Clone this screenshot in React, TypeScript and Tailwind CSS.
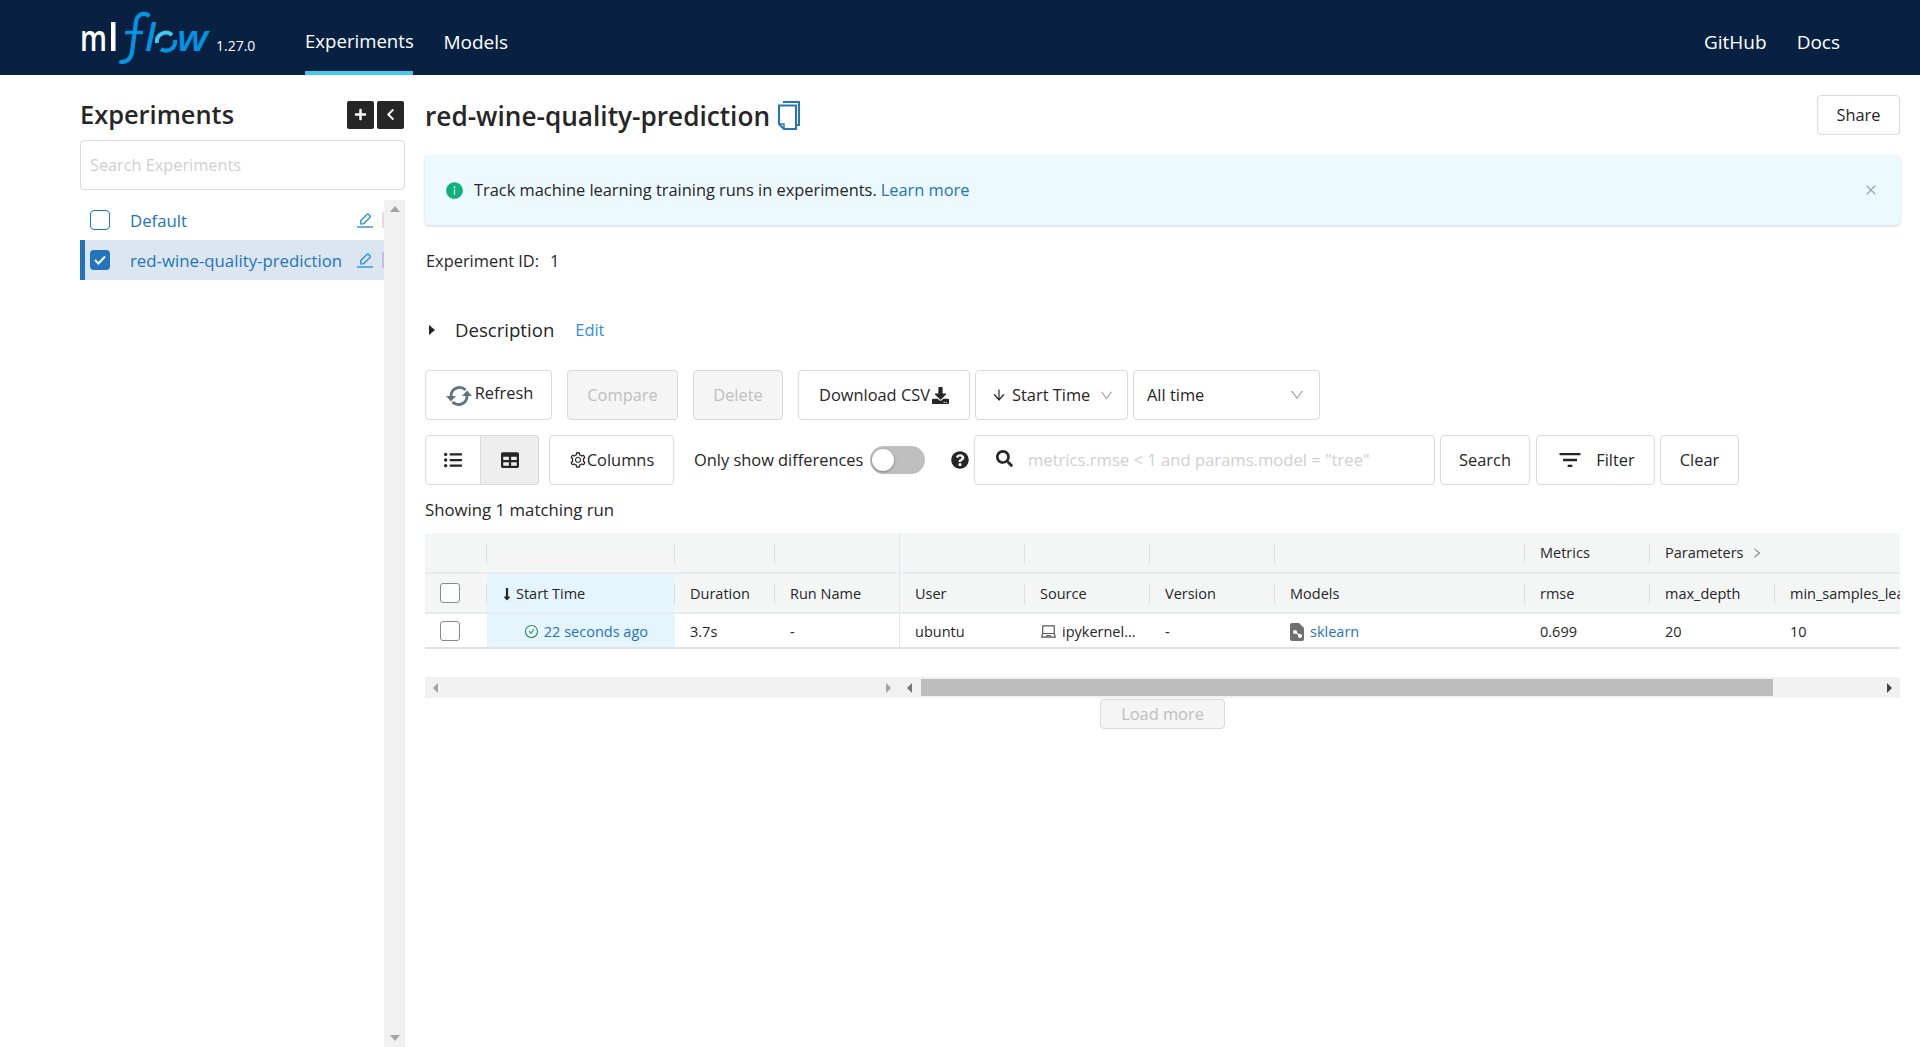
import React from 'react';
import {
  AiFillInfoCircle,
  AiOutlineArrowDown,
  AiOutlineCheckCircle,
  AiOutlineClose,
  AiOutlineDown,
  AiOutlineLaptop,
  AiOutlineRight,
  AiOutlineSetting,
} from 'react-icons/ai';
import {
  FaChevronLeft,
  FaDownload,
  FaListUl,
  FaLongArrowAltDown,
  FaPlus,
  FaQuestionCircle,
  FaSearch,
  FaTable,
} from 'react-icons/fa';
import { MdFilterList } from 'react-icons/md';

const MlflowLogo = () => (
  <svg width="132" height="56" viewBox="0 0 132 56" className="block">
    <text x="0" y="41" fontFamily="Open Sans, sans-serif" fontSize="36" fontWeight="600" fill="#ffffff" textLength="27" lengthAdjust="spacingAndGlyphs">m</text>
    <rect x="31" y="12" width="4.5" height="29" fill="#ffffff" />
    <path d="M68 5 C 62 2 57 5 56 12 L 52 42 C 51 49 47 52 41 52" fill="none" stroke="#0194e2" strokeWidth="4.2" strokeLinecap="round" />
    <path d="M45 22.5 L 63 22.5" fill="none" stroke="#0194e2" strokeWidth="3.4" />
    <text x="65" y="41" fontFamily="Open Sans, sans-serif" fontSize="38" fontStyle="italic" fontWeight="600" fill="#0194e2">l</text>
    <path d="M77 33 A 9 9 0 0 1 92 25" fill="none" stroke="#43c9ed" strokeWidth="4" />
    <path d="M95 30 A 9 9 0 0 1 81 39" fill="none" stroke="#0194e2" strokeWidth="4" />
    <text x="97" y="41" fontFamily="Open Sans, sans-serif" fontSize="36" fontStyle="italic" fontWeight="600" fill="#0194e2" textLength="31" lengthAdjust="spacingAndGlyphs">w</text>
  </svg>
);

const CopyIcon = () => (
  <svg width="22" height="29" viewBox="0 0 22 29" fill="none" stroke="#2374bb" strokeWidth="2" className="block">
    <path d="M5 1 H21 V24 H18" />
    <path d="M1 4.5 H18 V28 H6 L1 23 Z" />
    <path d="M1 23 H6 V28" strokeWidth="1.4" />
  </svg>
);

const SyncIcon = () => (
  <svg width="26" height="22" viewBox="0 0 26 22" fill="none" className="block shrink-0 mt-[2px]">
    <path d="M5 11 A 8.5 8.5 0 0 1 19.5 5" stroke="#5f7480" strokeWidth="2.8" />
    <path d="M0 11 H10 L5 16.5 Z" fill="#5f7480" />
    <path d="M21 11 A 8.5 8.5 0 0 1 6.5 17" stroke="#5f7480" strokeWidth="2.8" />
    <path d="M16 11 H26 L21 5.5 Z" fill="#5f7480" />
  </svg>
);

const EditIcon = () => (
  <svg width="16" height="15" viewBox="0 0 16 15" fill="none" stroke="#2f8fe0" className="block shrink-0">
    <path d="M4 11 L3.6 7.8 L10 1.4 Q10.8 0.7 11.6 1.4 L13 2.8 Q13.7 3.6 13 4.4 L6.8 10.6 Z" strokeWidth="1.4" />
    <path d="M0 14 H16" strokeWidth="1.4" />
  </svg>
);

const ModelIcon = () => (
  <svg width="14" height="18" viewBox="0 0 14 18" className="block shrink-0">
    <path d="M2 0 H9 L14 5 V16 Q14 18 12 18 H2 Q0 18 0 16 V2 Q0 0 2 0 Z" fill="#6f6f6f" />
    <path d="M5 9 L10 12.5" fill="none" stroke="#ffffff" strokeWidth="1.4" />
    <circle cx="5" cy="9" r="2" fill="#ffffff" />
    <circle cx="10" cy="13" r="2" fill="#ffffff" />
  </svg>
);

const Checkbox = ({ checked }: { checked?: boolean }) =>
  checked ? (
    <div className="w-5 h-5 shrink-0 rounded-[4px] bg-[#2374bb] flex items-center justify-center">
      <svg width="12" height="10" viewBox="0 0 12 10" fill="none" stroke="#ffffff" strokeWidth="2"><path d="M1 5 L4.5 8.5 L11 1.5" /></svg>
    </div>
  ) : (
    <div className="w-5 h-5 shrink-0 rounded-[4px] border border-[#2374bb] bg-white" />
  );

const TableCheckbox = () => <div className="w-5 h-5 shrink-0 rounded-[3px] border border-[#8a8a8a] bg-white" />;

const Button = ({ className, disabled, children }: { className: string; disabled?: boolean; children: React.ReactNode }) => (
  <div
    className={`h-[50px] flex items-center justify-center border rounded-[4px] border-[#d9d9d9] shrink-0 ${
      disabled ? 'bg-[#f5f5f5] text-[#bfbfbf]' : 'bg-white text-[#262626]'
    } ${className}`}
  >
    {children}
  </div>
);

const SideRow = ({ name, selected }: { name: string; selected?: boolean }) => (
  <div className={`h-10 flex items-center w-[304px] overflow-hidden ${selected ? 'bg-[#dce6f1] border-l-[5px] border-[#2374bb] pl-[5px]' : 'pl-[10px]'}`}>
    <Checkbox checked={selected} />
    <span className="ml-[20px] pt-px text-[#2374bb] text-[16.8px] w-[227px] shrink-0 whitespace-nowrap">{name}</span>
    <EditIcon />
    <div className={`ml-[9px] w-[3px] h-4 shrink-0 ${selected ? 'bg-[#c9b8ef]' : 'bg-[#efd3f5]'}`} />
  </div>
);

const columns = [
  { label: 'Duration', width: 'w-[100px]' },
  { label: 'Run Name', width: 'w-[125px]' },
  { label: 'User', width: 'w-[125px]' },
  { label: 'Source', width: 'w-[125px]' },
  { label: 'Version', width: 'w-[125px]' },
  { label: 'Models', width: 'w-[250px]' },
  { label: 'rmse', width: 'w-[125px]' },
  { label: 'max_depth', width: 'w-[125px]' },
  { label: 'min_samples_leaf', width: 'w-[126px]' },
];

const Divider = () => <div className="absolute right-0 top-[10px] h-5 w-px bg-[#dcdfe2]" />;

export default function App() {
  return (
    <div className="h-[1047px] overflow-hidden bg-white text-[#262626] font-['Open_Sans',sans-serif] text-[16.4px]">
      <div className="h-[75px] bg-[#082142] flex items-center pl-[80px] pr-[80px] text-white text-[19px]">
        <div className="w-[132px]"><MlflowLogo /></div>
        <span className="ml-[4px] mt-[15px] text-[14px]">1.27.0</span>
        <div className="ml-[50px] h-full w-[108px] flex items-center justify-center border-b-4 border-[#43c9ed] whitespace-nowrap pt-[11px] text-[18.6px]">Experiments</div>
        <div className="ml-[30px] pt-[9px]">Models</div>
        <div className="ml-auto pt-[9px]">GitHub</div>
        <div className="ml-[30px] pt-[9px]">Docs</div>
      </div>

      <div className="flex">
        <div className="ml-[80px] w-[325px] shrink-0 h-[972px]">
          <div className="flex items-center justify-between pt-[14px] h-[65px]">
            <h1 className="text-[25.4px] font-semibold leading-none">Experiments</h1>
            <div className="flex gap-[3px] mr-px">
              <div className="w-[27px] h-[28px] bg-[#262626] rounded-[2px] flex items-center justify-center text-white text-[13px]"><FaPlus /></div>
              <div className="w-[27px] h-[28px] bg-[#262626] rounded-[2px] flex items-center justify-center text-white text-[13px]"><FaChevronLeft /></div>
            </div>
          </div>
          <div className="h-[50px] border border-[#d9d9d9] rounded-[4px] flex items-center px-[9px] pt-px text-[#cfcfcf] text-[16.3px]">Search Experiments</div>
          <div className="mt-[10px] flex h-[847px]">
            <div className="w-[304px]">
              <SideRow name="Default" />
              <SideRow name="red-wine-quality-prediction" selected />
            </div>
            <div className="w-[21px] bg-[#f1f1f1] flex flex-col items-center justify-between py-[6px] text-[#a3a3a3]">
              <div className="w-0 h-0 border-x-[5px] border-x-transparent border-b-[6px] border-b-[#a3a3a3]" />
              <div className="w-0 h-0 border-x-[5px] border-x-transparent border-t-[6px] border-t-[#a3a3a3]" />
            </div>
          </div>
        </div>

        <div className="ml-[20px] w-[1475px] shrink-0">
          <div className="pt-[20px] flex items-start justify-between h-[60px]">
            <div className="flex items-center gap-[8px] h-[40px]">
              <h1 className="text-[26.2px] font-semibold leading-none pt-[3px]">red-wine-quality-prediction</h1>
              <CopyIcon />
            </div>
            <Button className="w-[83px] !h-10">Share</Button>
          </div>

          <div className="mt-[20px] h-[70px] bg-[#ecf9fe] rounded-[4px] shadow-[0_1px_3px_rgba(0,0,0,0.18)] flex items-center pl-[20px] pr-[20px]">
            <AiFillInfoCircle className="text-[#10b27a] text-[19px]" />
            <span className="ml-[10px]">Track machine learning training runs in experiments.</span>
            <span className="ml-[4px] text-[#2374bb]">Learn more</span>
            <AiOutlineClose className="ml-auto mr-[2px] text-[#8f9699] text-[14px]" />
          </div>

          <div className="mt-[25px] h-[22px] flex items-center pl-px leading-none">
            <span>Experiment ID:</span>
            <span className="ml-[11px]">1</span>
          </div>

          <div className="mt-[47px] h-[22px] flex items-center leading-none">
            <div className="ml-[4px] w-0 h-0 border-y-[5px] border-y-transparent border-l-[6px] border-l-[#262626]" />
            <span className="ml-[20px] text-[18.6px]">Description</span>
            <span className="ml-[21px] text-[#2f8fe0]">Edit</span>
          </div>

          <div className="mt-[29px] flex">
            <Button className="w-[127px] gap-[3px] pl-[2px]"><SyncIcon /><span className="mb-[3px]">Refresh</span></Button>
            <Button className="w-[111px] ml-[15px]" disabled>Compare</Button>
            <Button className="w-[90px] ml-[15px]" disabled>Delete</Button>
            <Button className="w-[172px] ml-[15px]">Download CSV<FaDownload className="text-[17px] ml-[2px]" /></Button>
            <Button className="w-[153px] ml-[5px] !justify-start pl-[15px]">
              <AiOutlineArrowDown className="text-[16px] mr-[5px]" />
              <span>Start Time</span>
              <AiOutlineDown className="text-[#a9a9a9] text-[15px] ml-[9px]" />
            </Button>
            <Button className="w-[187px] ml-[5px] !justify-between pl-[13px] pr-[14px]">
              <span>All time</span>
              <AiOutlineDown className="text-[#a9a9a9] text-[16px]" />
            </Button>
          </div>

          <div className="mt-[15px] flex items-center">
            <Button className="w-[56px] rounded-r-none"><FaListUl className="text-[18px]" /></Button>
            <Button className="w-[58px] rounded-l-none border-l-0 ml-0 !bg-[#eeeeee]"><FaTable className="text-[18px]" /></Button>
            <Button className="w-[125px] ml-[10px]"><AiOutlineSetting className="text-[18px]" />Columns</Button>
            <span className="ml-[20px] w-[176px] shrink-0 whitespace-nowrap">Only show differences</span>
            <div className="relative w-[55px] h-[28px] rounded-full bg-[#bfbfbf] shrink-0">
              <div className="absolute left-[2px] top-[3px] w-[22px] h-[22px] rounded-full bg-white shadow-[0_1px_3px_rgba(0,0,0,0.35)]" />
            </div>
            <FaQuestionCircle className="ml-[26px] text-[18px] text-[#262626] shrink-0" />
            <div className="ml-[5px] w-[461px] h-[50px] border border-[#d9d9d9] rounded-[4px] flex items-center pl-[21px] shrink-0">
              <FaSearch className="text-[17px] mb-[3px]" />
              <span className="ml-[15px] text-[#cfcfcf] text-[16.6px] whitespace-nowrap">metrics.rmse &lt; 1 and params.model = "tree"</span>
            </div>
            <Button className="w-[90px] ml-[5px]">Search</Button>
            <Button className="w-[119px] ml-[6px] gap-[12px]"><MdFilterList className="text-[28px]" />Filter</Button>
            <Button className="w-[79px] ml-[5px]">Clear</Button>
          </div>

          <div className="mt-[14px] h-[22px] flex items-center text-[16.8px]">Showing 1 matching run</div>

          <div className="mt-[12px] text-[14.5px] overflow-hidden">
            <div className="flex h-[41px] bg-[#f4f6f6] border-b-2 border-[#e9ecee]">
              <div className="relative w-[62px] shrink-0"><Divider /></div>
              <div className="relative w-[188px] shrink-0"><Divider /></div>
              <div className="relative w-[100px] shrink-0"><Divider /></div>
              <div className="relative w-[125px] shrink-0 border-r border-[#e3e6e8]" />
              <div className="relative w-[125px] shrink-0"><Divider /></div>
              <div className="relative w-[125px] shrink-0"><Divider /></div>
              <div className="relative w-[125px] shrink-0"><Divider /></div>
              <div className="relative w-[250px] shrink-0"><Divider /></div>
              <div className="relative w-[125px] shrink-0 flex items-center pl-[15px]">Metrics<Divider /></div>
              <div className="w-[150px] shrink-0 flex items-center pl-[15px] gap-[8px] whitespace-nowrap">Parameters <AiOutlineRight className="text-[12px] text-[#777777]" /></div>
            </div>
            <div className="flex h-[40px] bg-[#f4f6f6] border-b-2 border-[#e9ecee]">
              <div className="relative w-[62px] shrink-0 flex items-center pl-[15px]"><TableCheckbox /><Divider /></div>
              <div className="relative w-[188px] shrink-0 flex items-center pl-[13px] pt-[2px] bg-[#e5f5fd] whitespace-nowrap">
                <FaLongArrowAltDown className="text-[14px] mr-[2px]" />
                <span>Start Time</span>
                <Divider />
              </div>
              {columns.map((col, i) => (
                <div key={col.label} className={`relative ${col.width} shrink-0 flex items-center pl-[15px] pt-[2px] whitespace-nowrap overflow-hidden ${i === 1 ? 'border-r border-[#e3e6e8]' : ''}`}>
                  {col.label}
                  {i !== 1 && i !== 8 && <Divider />}
                </div>
              ))}
            </div>
            <div className="flex h-[35px] border-b-2 border-[#dfe3e6] items-stretch">
              <div className="w-[62px] shrink-0 flex items-center pl-[15px]"><TableCheckbox /></div>
              <div className="w-[188px] shrink-0 flex items-center justify-end pr-[27px] pt-[2px] bg-[#e5f5fd] text-[#2374bb] whitespace-nowrap">
                <AiOutlineCheckCircle className="text-[#2e8b57] text-[15px] mr-[5px]" />22 seconds ago
              </div>
              <div className="w-[100px] shrink-0 flex items-center pl-[15px] pt-[2px]">3.7s</div>
              <div className="w-[125px] shrink-0 flex items-center pl-[15px] pt-[2px] border-r border-[#e3e6e8]">-</div>
              <div className="w-[125px] shrink-0 flex items-center pl-[15px] pt-[2px]">ubuntu</div>
              <div className="w-[125px] shrink-0 flex items-center pl-[15px] pt-[2px] whitespace-nowrap">
                <AiOutlineLaptop className="text-[17px] text-[#555555] mr-[5px]" />ipykernel...
              </div>
              <div className="w-[125px] shrink-0 flex items-center pl-[15px] pt-[2px]">-</div>
              <div className="w-[250px] shrink-0 flex items-center pl-[15px] pt-[2px] text-[#2374bb]">
                <ModelIcon /><span className="ml-[6px]">sklearn</span>
              </div>
              <div className="w-[125px] shrink-0 flex items-center pl-[15px] pt-[2px]">0.699</div>
              <div className="w-[125px] shrink-0 flex items-center pl-[15px] pt-[2px]">20</div>
              <div className="w-[126px] shrink-0 flex items-center pl-[15px] pt-[2px]">10</div>
            </div>
          </div>

          <div className="mt-[28px] h-[21px] bg-[#f1f1f1] flex items-center">
            <div className="w-[474px] shrink-0 flex items-center justify-between px-[8px]">
              <div className="w-0 h-0 border-y-[5px] border-y-transparent border-r-[5px] border-r-[#a3a3a3]" />
              <div className="w-0 h-0 border-y-[5px] border-y-transparent border-l-[5px] border-l-[#a3a3a3]" />
            </div>
            <div className="ml-[8px] w-0 h-0 border-y-[5px] border-y-transparent border-r-[5px] border-r-[#777777] shrink-0" />
            <div className="ml-[9px] w-[852px] h-[17px] bg-[#bdbdbd] shrink-0" />
            <div className="ml-auto mr-[8px] w-0 h-0 border-y-[5px] border-y-transparent border-l-[5px] border-l-[#444444]" />
          </div>

          <div className="mt-px flex justify-center">
            <Button className="!h-[30px] w-[125px]" disabled>Load more</Button>
          </div>
        </div>
      </div>
    </div>
  );
}
